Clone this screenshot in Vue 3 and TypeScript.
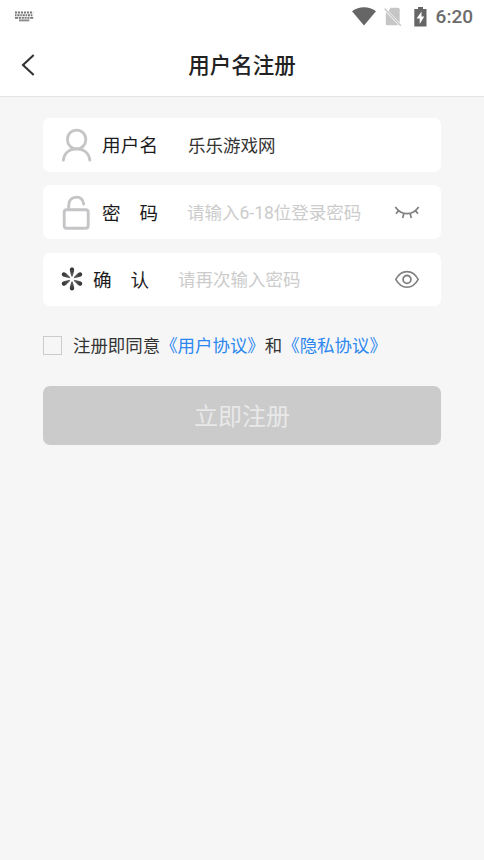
<script setup lang="ts">
import { ref } from 'vue'

const username = ref<string>('乐乐游戏网')
const password = ref<string>('')
const confirm = ref<string>('')
const agreed = ref<boolean>(false)
const showPassword = ref<boolean>(false)
const showConfirm = ref<boolean>(true)

const petals: number[] = [0, 60, 120, 180, 240, 300]
</script>

<template>
  <div class="screen">
    <header class="top">
      <div class="status">
        <svg class="keyboard" width="20" height="12" viewBox="0 0 20 12">
          <g fill="none" stroke="#777" stroke-width="1.9">
            <path d="M1 1.5H19.2" stroke-dasharray="2.1 .9" />
            <path d="M1 4.2H19.2" stroke-dasharray="1.5 .8 2.2 .8" />
            <path d="M1 6.9H19.2" stroke-dasharray="3.2 .8 2 .8 2 .8 2 .8 2 .8" />
            <path d="M5 9.4H15.3" stroke="#8c8c8c" />
          </g>
        </svg>
        <div class="indicators">
          <svg class="wifi" width="24" height="19" viewBox="0 0 24 19">
            <path d="M0 4.2C7-1.2 17-1.2 24 4.2L12 18.6Z" fill="#666" />
          </svg>
          <svg class="sim" width="18" height="20" viewBox="0 0 18 20">
            <path d="M6.4.7H14.2Q15.7.7 15.7 2.2V15.8L4.6 4.2ZM1.8 5L14.5 18.3H3.3Q1.8 18.3 1.8 16.8Z" fill="#c6c6c6" />
            <path d="M.7 1.7L16.8 18.7" stroke="#c6c6c6" stroke-width="1.4" />
          </svg>
          <svg class="battery" width="13" height="20" viewBox="0 0 13 20">
            <path d="M4 0H9V2H12.5V19.5H.3V2H4Z" fill="#666" />
            <path d="M7.5 4.4L2.6 11.6H5.7V17L10.3 9.5H7.5Z" fill="#fff" />
          </svg>
          <span class="clock">6:20</span>
        </div>
      </div>
      <div class="nav">
        <button class="back" type="button" aria-label="返回">
          <svg width="14" height="22" viewBox="0 0 14 22">
            <path d="M12.7 1L2 11L12.7 21" fill="none" stroke="#333" stroke-width="2.1" />
          </svg>
        </button>
        <h1>用户名注册</h1>
      </div>
    </header>

    <main>
      <label class="field">
        <svg class="icon" width="32" height="34" viewBox="0 0 32 34">
          <g fill="none" stroke="#c5c5c6" stroke-width="2.8" stroke-linecap="round">
            <ellipse cx="15.6" cy="11.5" rx="9.2" ry="9.4" />
            <path d="M2.3 32.2C3.3 25 8.5 20.9 15.6 20.9S27.9 25 28.9 32.2" />
          </g>
        </svg>
        <span class="label"><i>用</i><i>户</i><i>名</i></span>
        <input v-model="username" type="text" />
      </label>

      <label class="field secret">
        <svg class="icon" width="32" height="36" viewBox="0 0 32 36">
          <g fill="none" stroke="#c5c5c8" stroke-width="2.9" stroke-linecap="round">
            <rect x="3.2" y="15.8" width="24" height="18.4" rx="2.5" />
            <path d="M7.7 15V11.1C7.7 6 11 3.1 15.4 3.1C19.2 3.1 22.1 5.7 22.7 10" />
          </g>
        </svg>
        <span class="label"><i>密</i><i>码</i></span>
        <input v-model="password" :type="showPassword ? 'text' : 'password'" placeholder="请输入6-18位登录密码" />
        <svg class="eye" width="26" height="22" viewBox="0 0 26 22" @click="showPassword = !showPassword">
          <path d="M1.3 6C7.5 14.9 18.5 14.9 24.7 6M4.7 9.4L2 12.7M9.9 12.2L8.7 17M16.1 12.2L17.3 17M21.3 9.4L24 12.7" fill="none" stroke="#808080" stroke-width="1.7" />
        </svg>
      </label>

      <label class="field secret">
        <svg class="icon star" width="22" height="24" viewBox="-11 -12 22 24">
          <defs>
            <linearGradient id="petal" gradientUnits="userSpaceOnUse" x1="0" y1="-11" x2="0" y2="-2">
              <stop offset="0" stop-color="#333" />
              <stop offset="1" stop-color="#666" />
            </linearGradient>
          </defs>
          <path
            v-for="angle in petals"
            :key="angle"
            d="M0-11.4C2.6-11.4 2.3-8.8 1.9-7.2L.6-2.4H-.6L-1.9-7.2C-2.3-8.8-2.6-11.4 0-11.4Z"
            fill="url(#petal)"
            :transform="`rotate(${angle})`"
          />
        </svg>
        <span class="label"><i>确</i><i>认</i></span>
        <input v-model="confirm" :type="showConfirm ? 'text' : 'password'" placeholder="请再次输入密码" />
        <svg class="eye" width="26" height="22" viewBox="0 0 26 22" @click="showConfirm = !showConfirm">
          <g fill="none" stroke="#808080" stroke-width="1.6">
            <path d="M1.8 11.4C7.4 1 18.6 1 24.2 11.4C18.6 21.8 7.4 21.8 1.8 11.4Z" />
            <circle cx="13" cy="11.4" r="3.9" stroke-width="1.8" />
          </g>
        </svg>
      </label>

      <div class="agreement">
        <input v-model="agreed" class="check" type="checkbox" aria-label="同意" />
        <span>注册即同意<a>《用户协议》</a>和<a>《隐私协议》</a></span>
      </div>

      <button class="submit" type="button">立即注册</button>
    </main>
  </div>
</template>

<style>
body {
  background: #f6f6f6;
}
</style>

<style scoped>
.screen {
  min-height: 860px;
  background: #f6f6f6;
  font-family: Roboto, "Noto Sans CJK SC", sans-serif;
}
.top {
  box-sizing: border-box;
  height: 97px;
  background: #fff;
  border-bottom: 1px solid #e4e4e4;
}
.status {
  display: flex;
  justify-content: space-between;
  height: 33px;
  padding: 0 11px 0 14px;
}
.keyboard {
  margin-top: 11px;
}
.indicators {
  display: flex;
  align-items: center;
}
.wifi {
  margin-right: 8px;
}
.sim {
  margin-right: 12px;
}
.battery {
  margin-right: 9px;
}
.clock {
  font-size: 19px;
  font-weight: 500;
  line-height: 33px;
  color: #6c6c6c;
}
.nav {
  display: grid;
  grid-template-columns: 60px 1fr 60px;
  align-items: center;
  height: 63px;
}
.back {
  display: flex;
  margin: 0;
  padding: 0 0 0 21px;
  border: 0;
  background: none;
}
h1 {
  margin: 0;
  padding-top: 2px;
  text-align: center;
  font-size: 21.5px;
  font-weight: 500;
  line-height: 32px;
  color: #222;
}
main {
  padding: 21px 43px 0;
}
.field {
  box-sizing: border-box;
  display: flex;
  align-items: center;
  height: 53.6px;
  margin-bottom: 13.7px;
  padding: 0 21px 0 18px;
  border-radius: 7px;
  background: #fff;
}
.icon {
  flex: none;
  margin-right: 9px;
}
.star {
  margin-right: 10px;
}
.label {
  display: flex;
  justify-content: space-between;
  flex: none;
  width: 56px;
  margin-right: 30px;
  padding-top: 3px;
  font-size: 18.6px;
  line-height: 28px;
  color: #1c1c1c;
}
.secret .label {
  margin-right: 29px;
}
.label i {
  font-style: normal;
}
.field input {
  flex: 1;
  min-width: 0;
  height: 30px;
  margin: 0;
  padding: 0;
  border: 0;
  outline: 0;
  background: none;
  font-family: inherit;
  font-size: 17.5px;
  color: #333;
}
.secret input {
  height: 32px;
  padding-top: 2px;
}
.field input::placeholder {
  color: #ccc;
  opacity: 1;
}
.eye {
  flex: none;
}
.agreement {
  display: flex;
  align-items: center;
  height: 28px;
  margin-top: 26px;
  font-size: 17.45px;
  line-height: 28px;
  white-space: nowrap;
  color: #333;
}
.check {
  appearance: none;
  box-sizing: border-box;
  flex: none;
  width: 19px;
  height: 19px;
  margin: 0 11px 1px 0;
  border: 1px solid #ccc;
}
.check:checked {
  background: #2b87f0;
}
.agreement a {
  color: #2b87f0;
}
.submit {
  display: block;
  width: 100%;
  height: 59px;
  margin: 26px 0 0;
  padding: 0 0 2px;
  border: 0;
  border-radius: 7px;
  background: #cbcbcb;
  font-family: inherit;
  font-size: 24px;
  color: #e8e8e8;
}
</style>
